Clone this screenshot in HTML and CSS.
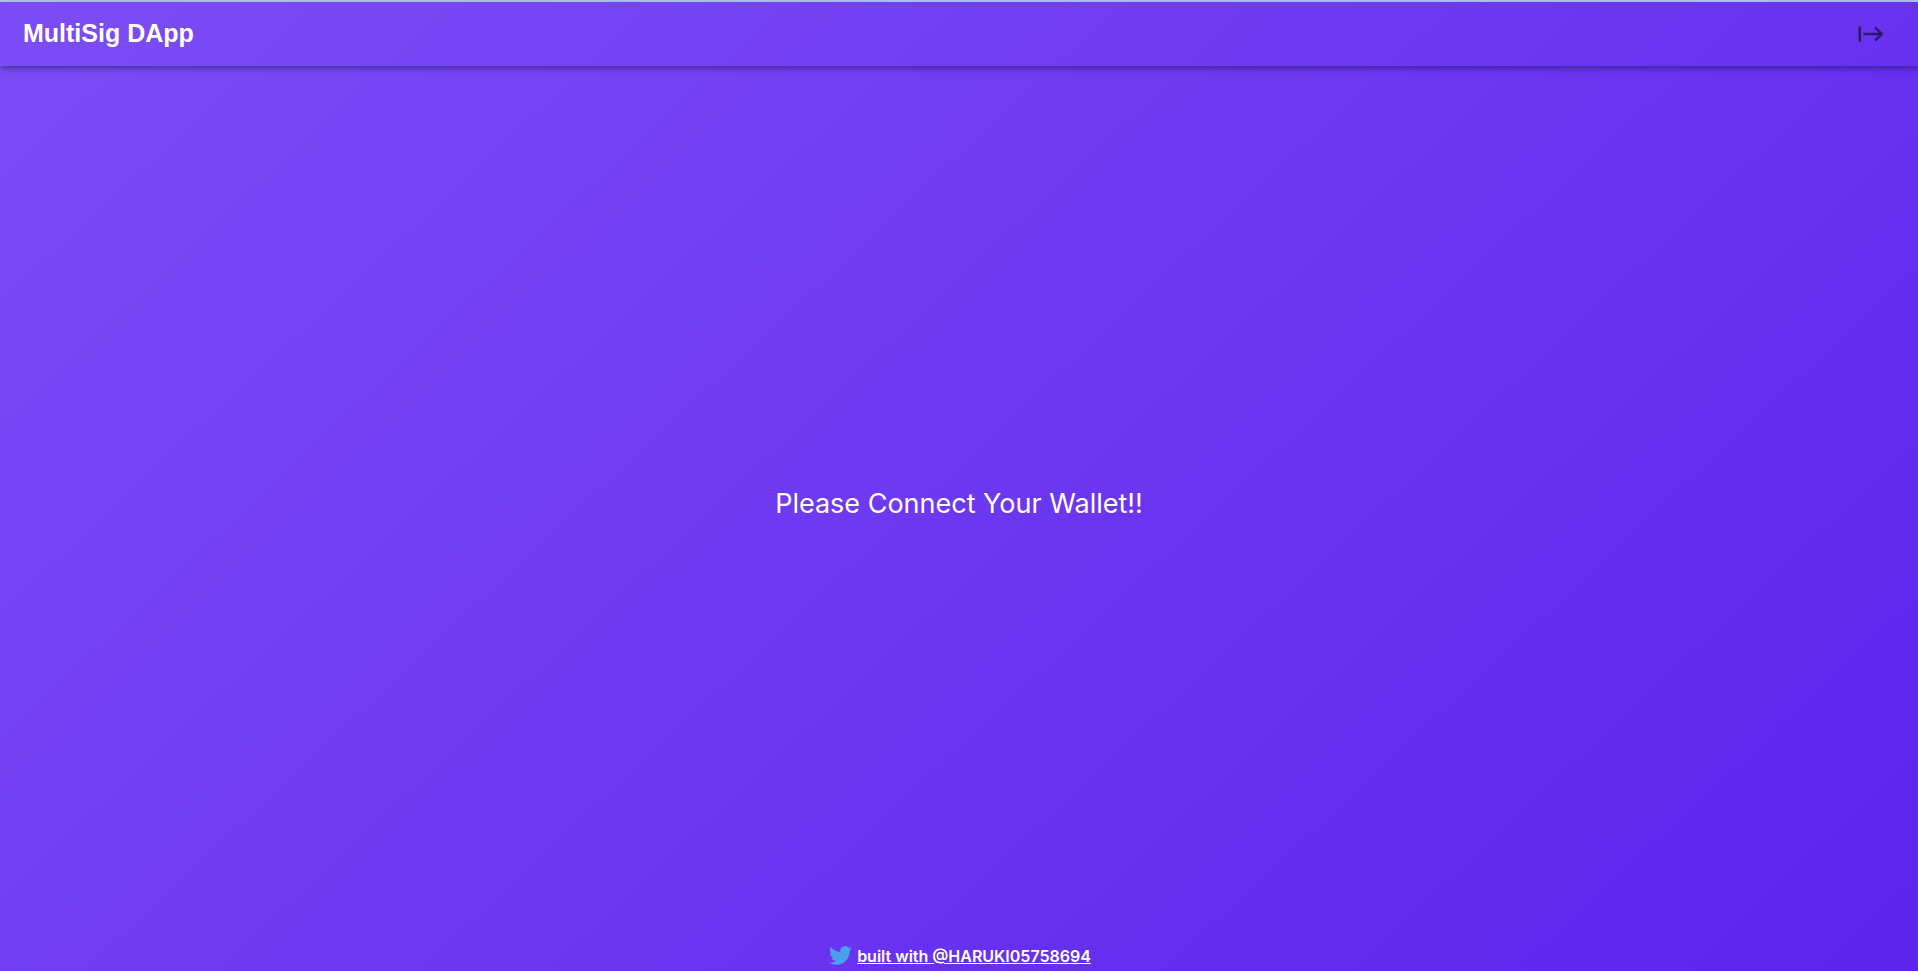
FILE: index.html
```html
<!DOCTYPE html>
<html lang="en">
<head>
<meta charset="utf-8">
<title>MultiSig DApp</title>
<link rel="stylesheet" href="styles.css">
</head>
<body>
<div class="app">
  <header class="app-bar">
    <h1 class="brand">MultiSig DApp</h1>
    <button class="icon-button" type="button" aria-label="Connect wallet">
      <svg class="start-icon" viewBox="0 0 24 24" aria-hidden="true"><path d="M14.59 7.41 18.17 11H6v2h12.17l-3.59 3.59L16 18l6-6-6-6-1.41 1.41zM2 6v12h2V6H2z"/></svg>
    </button>
  </header>
  <main class="content">
    <p class="message">Please Connect Your Wallet!!</p>
  </main>
  <footer class="footer">
    <svg class="bird" viewBox="0 0 24 24" aria-hidden="true"><path d="M23.953 4.57a10 10 0 01-2.825.775 4.958 4.958 0 002.163-2.723c-.951.555-2.005.959-3.127 1.184a4.92 4.92 0 00-8.384 4.482C7.69 8.095 4.067 6.13 1.64 3.162a4.822 4.822 0 00-.666 2.475c0 1.71.87 3.213 2.188 4.096a4.904 4.904 0 01-2.228-.616v.06a4.923 4.923 0 003.946 4.827 4.996 4.996 0 01-2.212.085 4.936 4.936 0 004.604 3.417 9.867 9.867 0 01-6.102 2.105c-.39 0-.779-.023-1.17-.067a13.995 13.995 0 007.557 2.209c9.053 0 13.998-7.496 13.998-13.985 0-.21 0-.42-.015-.63A9.935 9.935 0 0024 4.59z"/></svg>
    <a class="credit" href="#">built with @HARUKI05758694</a>
  </footer>
</div>
</body>
</html>
```
FILE: styles.css
```css
* {
  box-sizing: border-box;
}

body {
  margin: 0;
  color: #fff;
  font-family: Inter, sans-serif;
}

.app {
  display: flex;
  flex-direction: column;
  min-height: 100vh;
  border-top: 2px solid #b4c8ee;
  background: linear-gradient(137deg, #7c4df6, #5d23ec);
}

.app-bar {
  display: flex;
  align-items: center;
  justify-content: space-between;
  height: 64px;
  padding: 0 24px 0 23px;
  box-shadow: 0 2px 4px -1px rgba(0, 0, 0, 0.2), 0 4px 5px rgba(0, 0, 0, 0.14), 0 1px 10px rgba(0, 0, 0, 0.12);
}

.brand {
  margin: 0;
  padding-bottom: 2px;
  font: bold 25px/32px "Liberation Sans", Arial, sans-serif;
}

.icon-button {
  display: flex;
  padding: 8px;
  border: 0;
  background: none;
  color: rgba(0, 0, 0, 0.54);
  cursor: pointer;
}

.start-icon {
  width: 30px;
  height: 30px;
  fill: currentColor;
}

.content {
  display: grid;
  flex: 1;
  place-items: center;
}

.message {
  margin: 0;
  padding-bottom: 3px;
  font-size: 27px;
  line-height: 36px;
}

.footer {
  display: flex;
  align-items: flex-start;
  justify-content: center;
  gap: 5px;
  padding: 0 0 3px 2px;
}

.bird {
  width: 23px;
  height: 23px;
  fill: #4aa0eb;
}

.credit {
  color: inherit;
  font-size: 16px;
  font-weight: 600;
  line-height: 24px;
}
```
